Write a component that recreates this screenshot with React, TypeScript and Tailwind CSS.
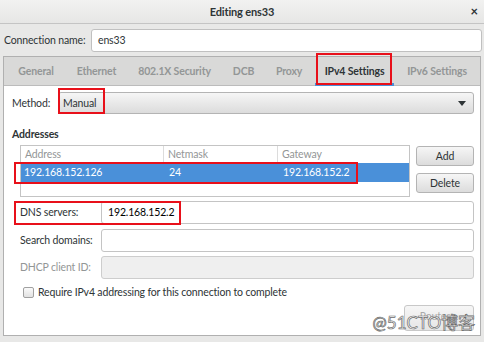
const tabs: [string, string][] = [
  ['General', 'w-[64px]'],
  ['Ethernet', 'w-[57px]'],
  ['802.1X Security', 'w-[99px]'],
  ['DCB', 'w-[39px]'],
  ['Proxy', 'w-[52px]'],
  ['IPv4 Settings', 'w-[79px]'],
  ['IPv6 Settings', 'w-[86px]'],
];

function RedBox({ className }: { className: string }) {
  return <span className={`pointer-events-none absolute border-2 border-[#e8101a] ${className}`} />;
}

const btn = 'rounded-[3px] border border-[#b4b4b4] bg-gradient-to-b from-[#f6f6f6] to-[#dcdcdc]';

export default function App() {
  return (
    <div
      className="w-[484px] h-[342px] bg-[#e8e8e7] flex flex-col text-[10.5px] tracking-[-0.15px] leading-[15px] text-[#2e3436] overflow-hidden whitespace-nowrap"
      style={{ fontFamily: 'Lato, "Noto Sans CJK SC", sans-serif' }}
    >
      {/* title bar */}
      <div className="h-[24px] shrink-0 flex items-center border-b border-[#c4c4c4] bg-gradient-to-b from-[#f2f2f1] to-[#e6e6e5] relative">
        <div className="flex-1 text-center font-bold text-[11px]">Editing ens33</div>
        <span className="absolute right-[6px] top-[5px] font-bold text-[13px] leading-none">×</span>
      </div>

      {/* connection name */}
      <div className="flex items-center mt-[5px] pl-[4px] pr-[2px]">
        <span className="w-[87px]">Connection name:</span>
        <div className="flex-1 h-[23px] bg-white border border-[#c0c0c0] rounded-[3px] flex items-center px-[6px]">ens33</div>
      </div>

      {/* notebook */}
      <div className="mx-[3px] mt-[4px] mb-[6px] flex-1 flex flex-col border border-[#b0b0b0] bg-white">
        <div className="h-[29px] shrink-0 bg-[#d9d9d8] border-b border-[#bcbcbc] flex items-stretch">
          {tabs.map(([t, w]) =>
            t === 'IPv4 Settings' ? (
              <div key={t} className={`relative ${w} flex items-center justify-center font-bold text-[#2e3436] border-b-[3px] border-[#4a90d9] pt-[3px] mb-[-1px]`}>
                {t}
                <RedBox className="left-[1px] w-[76px] -top-[4px] -bottom-[2px]" />
              </div>
            ) : (
              <div key={t} className={`${w} flex items-center justify-center font-bold text-[#939696]`}>
                {t}
              </div>
            )
          )}
        </div>

        <div className="flex-1 flex flex-col pl-[8px] pt-[6px]">
          {/* method */}
          <div className="flex items-center pr-[6px]">
            <span className="w-[46px]">Method:</span>
            <div className={`relative flex-1 h-[22px] ${btn} flex items-center pl-[4px] pr-[7px]`}>
              <span className="flex-1">Manual</span>
              <svg width="8" height="5" viewBox="0 0 8 5">
                <polygon points="0,0 8,0 4,5" fill="#2e3436" />
              </svg>
              <RedBox className="-left-[1px] -top-[5px] w-[47px] -bottom-[1px]" />
            </div>
          </div>

          <div className="font-bold mt-[13px]">Addresses</div>

          {/* addresses */}
          <div className="flex mt-[3px] pl-[8px] pr-[6px] gap-[6px]">
            <div className="flex-1 h-[52px] border border-[#c4c4c4] flex flex-col">
              <div className="h-[17px] flex text-[#939696]">
                <div className="w-[143px] pl-[4px] border-r border-[#dcdcdc] flex items-center">Address</div>
                <div className="w-[114px] pl-[4px] border-r border-[#dcdcdc] flex items-center">Netmask</div>
                <div className="flex-1 pl-[4px] flex items-center">Gateway</div>
              </div>
              <div className="relative h-[19px] flex bg-[#4a90d9] text-white">
                <div className="w-[143px] pl-[3px] flex items-center">192.168.152.126</div>
                <div className="w-[114px] pl-[5px] flex items-center">24</div>
                <div className="flex-1 pl-[5px] flex items-center">192.168.152.2</div>
                <RedBox className="-left-[7px] -top-[1px] w-[344px] -bottom-[2px]" />
              </div>
            </div>
            <div className="w-[58px] flex flex-col gap-[7px] pt-[1px]">
              <button className={`h-[20px] ${btn}`}>Add</button>
              <button className={`h-[20px] ${btn}`}>Delete</button>
            </div>
          </div>

          {/* fields */}
          <div className="flex flex-col mt-[4px] pl-[8px] pr-[6px]">
            <div className="relative flex items-center h-[23px]">
              <span className="w-[81px]">DNS servers:</span>
              <div className="flex-1 h-full border border-[#c4c4c4] rounded-[3px] flex items-center px-[6px] text-black">192.168.152.2</div>
              <RedBox className="-left-[6px] top-0 w-[167px] -bottom-[1px]" />
            </div>
            <div className="flex items-center h-[23px] mt-[5px]">
              <span className="w-[81px]">Search domains:</span>
              <div className="flex-1 h-full border border-[#c4c4c4] rounded-[3px]" />
            </div>
            <div className="flex items-center h-[23px] mt-[4px]">
              <span className="w-[81px] text-[#939696]">DHCP client ID:</span>
              <div className="flex-1 h-full border border-[#cdcdcd] rounded-[3px] bg-[#efefef]" />
            </div>
          </div>

          <label className="flex items-center gap-[4px] mt-[6px] pl-[11px]">
            <span className="w-[11px] h-[11px] rounded-[2px] border border-[#a0a0a0] bg-gradient-to-b from-[#fafafa] to-[#e2e2e2]" />
            <span>Require IPv4 addressing for this connection to complete</span>
          </label>

          <div className="flex justify-end pr-[6px] mt-[5px]">
            <div className="relative">
              <button className="w-[70px] h-[26px] rounded-[3px] border border-[#c8c8c8] bg-gradient-to-b from-[#f6f6f6] to-[#e6e6e6] text-[#a8a8a8] items-start flex justify-center pt-[3px]">Routes…</button>
              <span className="absolute right-[-1px] top-[7px] text-[17px] leading-[21px] tracking-normal text-white [-webkit-text-stroke:0.7px_#6a6a6a]">@51CTO博客</span>
            </div>
          </div>
        </div>
      </div>
    </div>
  );
}
